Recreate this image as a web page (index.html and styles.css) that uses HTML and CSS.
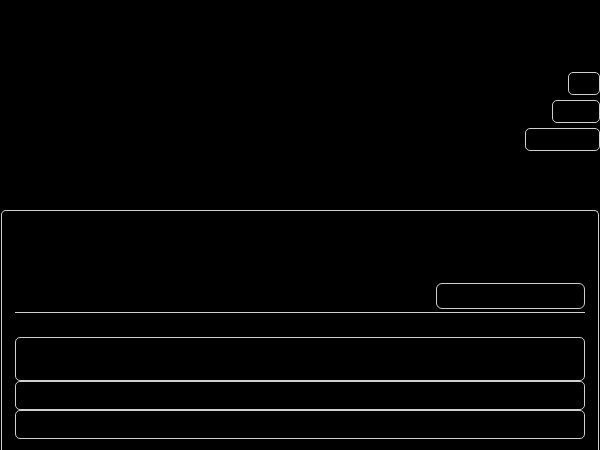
FILE: index.html
```html
<!DOCTYPE html>
<html lang="en">
<head>
<meta charset="utf-8">
<title>Wireframe</title>
<link rel="stylesheet" href="styles.css">
</head>
<body>
<div class="top">
  <div class="chip chip-s"></div>
  <div class="chip chip-m"></div>
  <div class="chip chip-l"></div>
</div>
<section class="panel">
  <div class="panel-head">
    <div class="action"></div>
  </div>
  <div class="divider"></div>
  <div class="rows">
    <div class="row row-tall"></div>
    <div class="row"></div>
    <div class="row"></div>
  </div>
</section>
</body>
</html>
```
FILE: styles.css
```css
html, body {
  margin: 0;
  padding: 0;
  background: #000;
  font-family: "Liberation Sans", Arial, sans-serif;
  color: #000;
  overflow: hidden;
}
.top {
  height: 138px;
  padding-top: 72px;
  display: flex;
  flex-direction: column;
  align-items: flex-end;
  gap: 5px;
}
.chip {
  box-sizing: border-box;
  height: 23px;
  border: 1px solid #cfcfcf;
  border-radius: 5px;
}
.chip-s { width: 32px; }
.chip-m { width: 48px; }
.chip-l { width: 75px; }
.panel {
  box-sizing: border-box;
  margin: 0 1px;
  height: 260px;
  border: 1px solid #cfcfcf;
  border-bottom: none;
  border-radius: 5px 5px 0 0;
  padding: 0 13px;
}
.panel-head {
  display: flex;
  justify-content: flex-end;
  padding-top: 72px;
}
.action {
  box-sizing: border-box;
  width: 149px;
  height: 26px;
  border: 1px solid #cfcfcf;
  border-radius: 6px;
}
.divider {
  margin-top: 3px;
  height: 1px;
  background: #cfcfcf;
}
.rows {
  margin-top: 24px;
  display: flex;
  flex-direction: column;
}
.row {
  box-sizing: border-box;
  height: 29px;
  border: 1px solid #cfcfcf;
  border-radius: 5px;
}
.row-tall { height: 44px; }
```
